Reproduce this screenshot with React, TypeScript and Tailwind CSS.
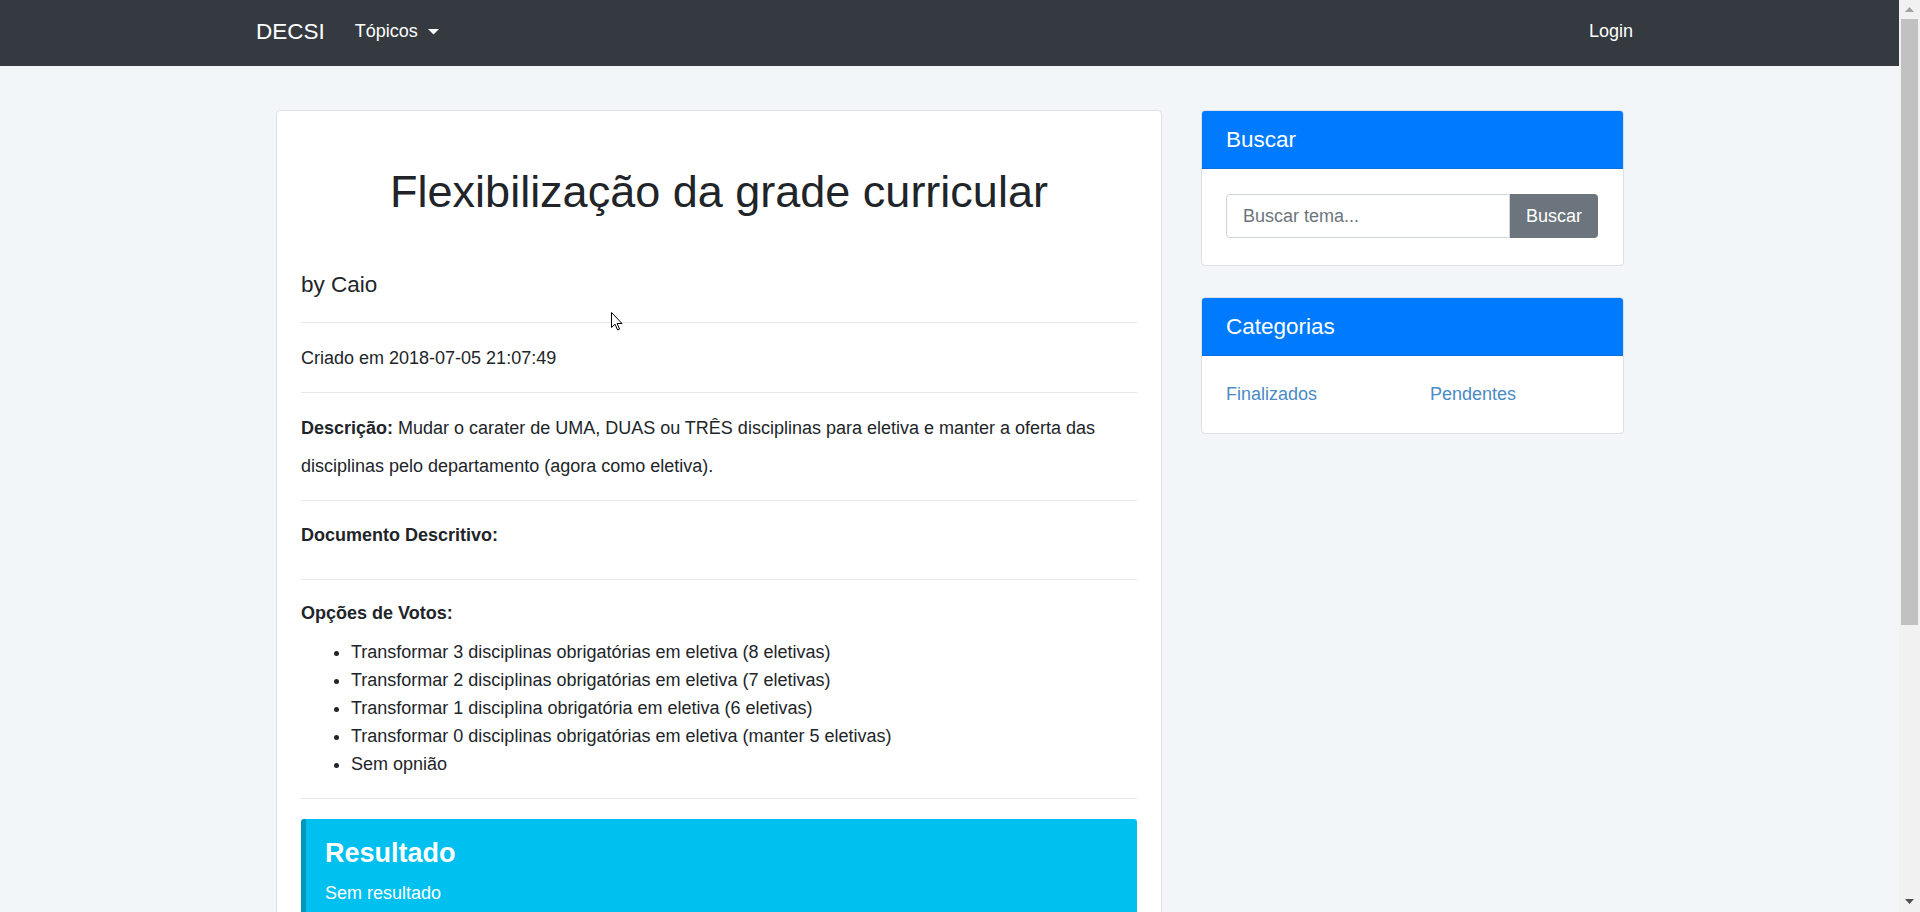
import React from "react";

function Caret() {
  return (
    <svg width="11" height="6" viewBox="0 0 11 6" className="ml-[10px] mt-[1px]">
      <polygon points="0,0 11,0 5.5,5.5" fill="#ffffff" />
    </svg>
  );
}

function SideCard({ title, children, className = "" }: { title: string; children: React.ReactNode; className?: string }) {
  return (
    <div className={"border border-[#dcdfe3] rounded-[4px] bg-white overflow-hidden " + className}>
      <div className="h-[58px] bg-[#007bff] border-b border-[#0a6fdc] flex items-center pl-[24px] text-white text-[22.5px] leading-[27px]">
        {title}
      </div>
      {children}
    </div>
  );
}

export default function App() {
  const options = [
    "Transformar 3 disciplinas obrigatórias em eletiva (8 eletivas)",
    "Transformar 2 disciplinas obrigatórias em eletiva (7 eletivas)",
    "Transformar 1 disciplina obrigatória em eletiva (6 eletivas)",
    "Transformar 0 disciplinas obrigatórias em eletiva (manter 5 eletivas)",
    "Sem opnião",
  ];
  return (
    <div className="flex h-[912px] w-full overflow-hidden font-['Liberation_Sans',Arial,sans-serif] text-[18px] text-[#212529]">
      <div className="relative flex-1 min-w-0 h-full overflow-hidden bg-[#f3f6f9]">
        {/* Navbar */}
        <nav className="h-[66px] bg-[#343a40] flex items-center pl-[256px] pr-[266px]">
          <span className="text-white text-[22.5px] leading-[27px] mb-[4px]">DECSI</span>
          <span className="ml-[30px] mb-[4px] flex items-center text-white leading-[27px]">
            Tópicos
            <Caret />
          </span>
          <span className="ml-auto mb-[4px] text-white leading-[27px]">Login</span>
        </nav>

        {/* Content */}
        <div className="flex items-start pt-[44px] pl-[276px]">
          {/* Main card */}
          <div className="w-[886px] shrink-0 bg-white border border-[#dcdfe3] rounded-[4px] px-[24px] pt-[24px] pb-[24px]">
            <h1 className="mt-[30px] text-center text-[45px] leading-[54px]">Flexibilização da grade curricular</h1>
            <h5 className="mt-[52px] text-[22.5px] leading-[27px]">by Caio</h5>
            <hr className="mt-[24px] border-0 border-t border-[#e6e6e6]" />
            <p className="mt-[22px] leading-[27px]">Criado em 2018-07-05 21:07:49</p>
            <hr className="mt-[20px] border-0 border-t border-[#e6e6e6]" />
            <p className="mt-[16px] leading-[38px]">
              <b>Descrição:</b>{" "}Mudar o carater de UMA, DUAS ou TRÊS disciplinas para eletiva e manter a oferta das disciplinas pelo departamento (agora como eletiva).
            </p>
            <hr className="mt-[15px] border-0 border-t border-[#e6e6e6]" />
            <p className="mt-[21px] leading-[27px] font-bold">Documento Descritivo:</p>
            <hr className="mt-[30px] border-0 border-t border-[#e6e6e6]" />
            <p className="mt-[20px] leading-[27px] font-bold">Opções de Votos:</p>
            <ul className="mt-[11px] list-disc pl-[50px] leading-[28px]">
              {options.map((o) => (
                <li key={o}>{o}</li>
              ))}
            </ul>
            <hr className="mt-[20px] border-0 border-t border-[#e6e6e6]" />
            <div className="mt-[20px] bg-[#00c0ef] border-l-[5px] border-[#0097bc] rounded-[3px] pl-[19px] pt-[18px] pb-[20px] text-white">
              <h4 className="text-[27px] leading-[32px] font-bold">Resultado</h4>
              <p className="mt-[11px] leading-[27px]">Sem resultado</p>
            </div>
          </div>

          {/* Sidebar */}
          <div className="w-[423px] shrink-0 ml-[39px] flex flex-col">
            <SideCard title="Buscar">
              <div className="flex pl-[24px] pr-[25px] pt-[25px] pb-[27px]">
                <input
                  className="h-[44px] w-[284px] border border-[#ced4da] rounded-l-[4px] pl-[16px] text-[18px] text-[#495057] placeholder:text-[#6c757d] outline-none"
                  placeholder="Buscar tema..."
                />
                <button className="h-[44px] w-[88px] bg-[#6c757d] text-white text-[18px] rounded-r-[4px]">Buscar</button>
              </div>
            </SideCard>
            <SideCard title="Categorias" className="mt-[31px]">
              <div className="grid grid-cols-2 gap-x-[36px] pl-[24px] pr-[25px] pt-[25px] pb-[25px] leading-[27px] text-[#4a8ac6]">
                <a>Finalizados</a>
                <a>Pendentes</a>
              </div>
            </SideCard>
          </div>
        </div>

        {/* mouse cursor */}
        <svg className="absolute left-[611px] top-[312px]" width="12" height="19" viewBox="0 0 12 19">
          <path d="M0.5 0.5 L0.5 15.5 L4 12.2 L6.6 18 L8.6 17.1 L6.1 11.5 L11 11.5 Z" fill="#ffffff" stroke="#000000" strokeWidth="1" strokeLinejoin="round" />
        </svg>
      </div>

      {/* Scrollbar */}
      <div className="w-[21px] h-full bg-[#f1f1f1] flex flex-col items-center">
        <div className="h-[19px] flex items-start pt-[7px]">
          <svg width="9" height="5" viewBox="0 0 9 5">
            <polygon points="0,5 4.5,0 9,5" fill="#a3a3a3" />
          </svg>
        </div>
        <div className="w-[17px] h-[606px] bg-[#c1c1c1]" />
        <div className="flex-1" />
        <div className="h-[17px] flex items-start pt-[4px]">
          <svg width="9" height="5" viewBox="0 0 9 5">
            <polygon points="0,0 9,0 4.5,5" fill="#505050" />
          </svg>
        </div>
      </div>
    </div>
  );
}
